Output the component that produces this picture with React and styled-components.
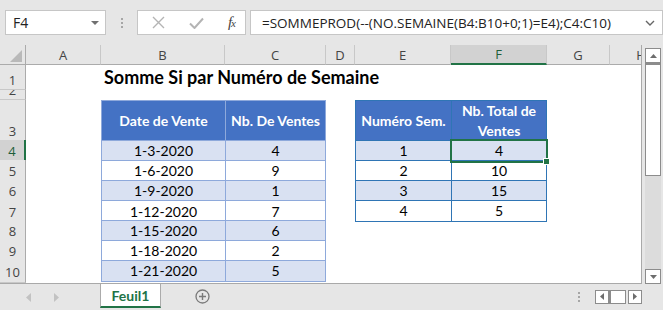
import React from 'react';
import styled, { createGlobalStyle, css } from 'styled-components';

const GlobalStyle = createGlobalStyle`
  html, body { margin: 0; padding: 0; background: #fff; }
  body { font-family: "Open Sans", "Noto Sans", sans-serif; }
`;

const UI_FONT = '"Open Sans", "Noto Sans", sans-serif';
const CELL_FONT = 'Lato, "Liberation Sans", sans-serif';
const GREEN = '#217346';

// column widths: row header, A, B, C, D, E, F, G, H (H runs under the scrollbar)
const LETTERS = ['A', 'B', 'C', 'D', 'E', 'F', 'G', 'H'];
const COLS = [26, 75, 124, 101, 29, 96, 96, 63, 63];
const TEMPLATE = COLS.map((c) => `${c}px`).join(' ');

const sales = [
  ['1-3-2020', 4],
  ['1-6-2020', 9],
  ['1-9-2020', 1],
  ['1-12-2020', 7],
  ['1-15-2020', 6],
  ['1-18-2020', 2],
  ['1-21-2020', 5],
];
const totals = [
  [1, 4],
  [2, 10],
  [3, 15],
  [4, 5],
];

const Window = styled.div`
  width: 663px;
  height: 310px;
  display: flex;
  flex-direction: column;
  background: #e6e6e6;
  overflow: hidden;
  font-family: ${UI_FONT};
`;

/* ---------- formula bar ---------- */

const Toolbar = styled.div`
  height: 45px;
  flex: none;
  display: flex;
  align-items: flex-start;
  padding: 10px 0 0 5px;
  box-sizing: border-box;
`;

const Box = styled.div`
  height: 25px;
  box-sizing: border-box;
  background: #fff;
  border: 1px solid #c6c6c6;
  display: flex;
  align-items: center;
`;

const NameBox = styled(Box)`
  width: 101px;
  padding: 0 6px 0 7px;
  justify-content: space-between;
  font-size: 14px;
  color: #222;
`;

const Grip = styled.div`
  width: 31px;
  height: 25px;
  display: flex;
  flex-direction: column;
  align-items: center;
  justify-content: center;
  gap: 2px;

  span {
    width: 2px;
    height: 2px;
    background: #a6a6a6;
  }
`;

const FxBox = styled(Box)`
  width: 109px;
  padding: 0 10px 0 14px;
  justify-content: space-between;
`;

const FxLabel = styled.span`
  font-family: "Liberation Serif", serif;
  font-style: italic;
  font-size: 15px;
  color: #444;
  letter-spacing: -1px;

  small {
    font-size: 11px;
  }
`;

const FormulaBox = styled(Box)`
  flex: 1;
  margin-left: 4px;
  padding: 0 7px 0 11px;
  justify-content: space-between;
  font-size: 13.5px;
  color: #222;
  white-space: nowrap;
`;

/* ---------- sheet ---------- */

const SheetArea = styled.div`
  height: 239px;
  flex: none;
  display: flex;
`;

const Grid = styled.div`
  width: 642px;
  display: flex;
  flex-direction: column;
  background: #fff;
  border-right: 1px solid #a9a9a9;
  border-bottom: 1px solid #a9a9a9;
  box-sizing: border-box;
  overflow: hidden;
`;

const Row = styled.div`
  display: grid;
  grid-template-columns: ${TEMPLATE};
  height: ${(p) => p.$h}px;
  flex: none;
`;

const Filler = styled.div`
  flex: 1;
  display: grid;
  grid-template-columns: ${TEMPLATE};
`;

const Corner = styled.div`
  background: #e6e6e6;
  border-right: 1px solid #ababab;
  border-bottom: 1px solid #ababab;
  display: flex;
  align-items: flex-end;
  justify-content: flex-end;
  padding: 0 3px 2px 0;
`;

const ColHead = styled.div`
  background: ${(p) => (p.$active ? '#d2d2d2' : '#e6e6e6')};
  border-right: 1px solid #c8c8c8;
  border-bottom: ${(p) => (p.$active ? `2px solid ${GREEN}` : '1px solid #ababab')};
  display: flex;
  align-items: center;
  justify-content: center;
  font-size: 13px;
  color: ${(p) => (p.$active ? '#1e5e3a' : '#444')};
  overflow: hidden;
  white-space: nowrap;
`;

const RowHead = styled.div`
  background: ${(p) => (p.$active ? '#d2d2d2' : '#e6e6e6')};
  border-right: ${(p) => (p.$active ? `2px solid ${GREEN}` : '1px solid #ababab')};
  border-bottom: 1px solid #c8c8c8;
  display: flex;
  align-items: flex-end;
  justify-content: center;
  font-size: 13px;
  line-height: 18px;
  color: ${(p) => (p.$active ? '#1e5e3a' : '#444')};
  overflow: hidden;
`;

const Blank = styled.div`
  background: #fff;
`;

const Title = styled.div`
  display: flex;
  align-items: flex-end;
  padding: 0 0 2px 3px;
  font-family: ${CELL_FONT};
  font-weight: 700;
  font-size: 18px;
  color: #000;
  white-space: nowrap;
  overflow: visible;
  position: relative;
  z-index: 1;
`;

const TCell = styled.div`
  position: relative;
  display: flex;
  align-items: center;
  justify-content: center;
  text-align: center;
  font-family: ${CELL_FONT};
  font-size: 14px;
  line-height: 20px;
  font-weight: ${(p) => (p.$head ? 700 : 400)};
  color: ${(p) => (p.$head ? '#fff' : '#000')};
  background: ${(p) => (p.$head ? '#4472c4' : p.$band ? '#d9e1f2' : '#fff')};
  border-top: 1px solid ${(p) => p.$line};
  border-left: 1px solid ${(p) => p.$line};
  ${(p) => p.$last && css`border-right: 1px solid ${p.$line};`}
  ${(p) => p.$bottom && css`border-bottom: 1px solid ${p.$line};`}
`;

const Selection = styled.div`
  position: absolute;
  top: -2px;
  left: -2px;
  right: -2px;
  bottom: -2px;
  border: 2px solid ${GREEN};
  z-index: 3;
  pointer-events: none;

  &::after {
    content: '';
    position: absolute;
    right: -4px;
    bottom: -4px;
    width: 5px;
    height: 5px;
    background: ${GREEN};
    border: 1px solid #fff;
  }
`;

/* ---------- vertical scrollbar ---------- */

const VScroll = styled.div`
  width: 21px;
  display: flex;
  flex-direction: column;
  padding: 3px 2px 0 3px;
  box-sizing: border-box;
`;

const ScrollBtn = styled.div`
  width: ${(p) => p.$w || 16}px;
  height: ${(p) => p.$h || 15}px;
  box-sizing: border-box;
  border: 1px solid #8c8c8c;
  background: #fff;
  display: flex;
  align-items: center;
  justify-content: center;
  flex: none;
`;

const VThumb = styled.div`
  height: 113px;
  flex: none;
  box-sizing: border-box;
  background: #fff;
  border: 1px solid #8c8c8c;
  border-top: 2px solid #8c8c8c;
`;

const VTrack = styled.div`
  flex: 1;
  background: #dcdcdc;
`;

/* ---------- sheet tabs ---------- */

const TabBar = styled.div`
  flex: 1;
  display: flex;
  align-items: stretch;
`;

const NavArrows = styled.div`
  width: 100px;
  display: flex;
  align-items: center;
  padding-left: 26px;
  gap: 23px;
  box-sizing: border-box;
`;

const SheetTab = styled.div`
  width: 61px;
  height: 24px;
  box-sizing: border-box;
  background: #fff;
  border-left: 1px solid #ababab;
  border-right: 1px solid #ababab;
  border-bottom: 2px solid ${GREEN};
  display: flex;
  align-items: center;
  justify-content: center;
  font-family: ${CELL_FONT};
  font-weight: 700;
  font-size: 14px;
  color: ${GREEN};
`;

const AddSheet = styled.div`
  margin-left: 34px;
  display: flex;
  align-items: center;
  padding-bottom: 1px;
`;

const HScroll = styled.div`
  margin-left: auto;
  margin-right: 21px;
  display: flex;
  align-items: center;
  padding-bottom: 1px;
`;

const HGrip = styled.div`
  display: flex;
  flex-direction: column;
  gap: 2px;
  margin-right: 15px;

  span {
    width: 2px;
    height: 2px;
    background: #a6a6a6;
  }
`;

const HThumb = styled.div`
  width: 17px;
  height: 14px;
  box-sizing: border-box;
  background: #fff;
  border: 1px solid #8c8c8c;
  border-left: 2px solid #8c8c8c;
  margin-right: 2px;
`;

const Tri = ({ dir, color = '#6d6d6d', w = 7, h = 4 }) => {
  const pts = {
    up: `0,${h} ${w / 2},0 ${w},${h}`,
    down: `0,0 ${w / 2},${h} ${w},0`,
    left: `${h},0 0,${w / 2} ${h},${w}`,
    right: `0,0 ${h},${w / 2} 0,${w}`,
  }[dir];
  const vertical = dir === 'up' || dir === 'down';
  return (
    <svg width={vertical ? w : h} height={vertical ? h : w}>
      <polygon points={pts} fill={color} />
    </svg>
  );
};

const GripDots = ({ as: As }) => (
  <As>
    <span />
    <span />
    <span />
  </As>
);

const rows = [
  { n: 1, h: 25 },
  { n: 2, h: 10 },
  { n: 3, h: 40 },
  ...sales.map((_, i) => ({ n: i + 4, h: 20 })),
];

const LEFT_LINE = '#8ea9db';
const RIGHT_LINE = '#2f75b5';

function renderCell(r, col) {
  const key = `${r}-${col}`;
  if (r === 1 && col === 'B') {
    return <Title key={key}>Somme Si par Numéro de Semaine</Title>;
  }
  if (r >= 3 && (col === 'B' || col === 'C')) {
    const head = r === 3;
    const k = r - 4;
    const text = head
      ? col === 'B' ? 'Date de Vente' : 'Nb. De Ventes'
      : sales[k][col === 'B' ? 0 : 1];
    return (
      <TCell
        key={key}
        $line={LEFT_LINE}
        $head={head}
        $band={!head && k % 2 === 0}
        $last={col === 'C'}
        $bottom={r === 10}
      >
        {text}
      </TCell>
    );
  }
  if (r >= 3 && r <= 7 && (col === 'E' || col === 'F')) {
    const head = r === 3;
    const k = r - 4;
    const text = head
      ? col === 'E' ? 'Numéro Sem.' : <>Nb. Total de<br />Ventes</>
      : totals[k][col === 'E' ? 0 : 1];
    return (
      <TCell
        key={key}
        $line={RIGHT_LINE}
        $head={head}
        $band={!head && k % 2 === 0}
        $last={col === 'F'}
        $bottom={r === 7}
      >
        {text}
        {r === 4 && col === 'F' && <Selection />}
      </TCell>
    );
  }
  return <Blank key={key} />;
}

export default function App() {
  return (
    <>
      <GlobalStyle />
      <Window>
        <Toolbar>
          <NameBox>
            F4
            <Tri dir="down" color="#707070" w={8} h={4} />
          </NameBox>
          <GripDots as={Grip} />
          <FxBox>
            <svg width="13" height="13" viewBox="0 0 13 13">
              <path d="M1 1 L12 12 M12 1 L1 12" stroke="#b4b4b4" strokeWidth="1.4" />
            </svg>
            <svg width="15" height="12" viewBox="0 0 15 12">
              <path d="M1 6.5 L5.5 11 L14 1.5" stroke="#b4b4b4" strokeWidth="2" fill="none" />
            </svg>
            <FxLabel>
              f<small>x</small>
            </FxLabel>
          </FxBox>
          <FormulaBox>
            <span>=SOMMEPROD(--(NO.SEMAINE(B4:B10+0;1)=E4);C4:C10)</span>
            <svg width="10" height="6" viewBox="0 0 10 6">
              <path d="M1 1 L5 5 L9 1" stroke="#666" strokeWidth="1.4" fill="none" />
            </svg>
          </FormulaBox>
        </Toolbar>

        <SheetArea>
          <Grid>
            <Row $h={20}>
              <Corner>
                <svg width="12" height="12">
                  <polygon points="12,0 12,12 0,12" fill="#b9b9b9" />
                </svg>
              </Corner>
              {LETTERS.map((l) => (
                <ColHead key={l} $active={l === 'F'}>
                  {l}
                </ColHead>
              ))}
            </Row>
            {rows.map((row) => (
              <Row key={row.n} $h={row.h}>
                <RowHead $active={row.n === 4}>{row.n}</RowHead>
                {LETTERS.map((l) => renderCell(row.n, l))}
              </Row>
            ))}
            <Filler>
              <RowHead />
            </Filler>
          </Grid>
          <VScroll>
            <ScrollBtn>
              <Tri dir="up" />
            </ScrollBtn>
            <VThumb />
            <VTrack />
            <ScrollBtn>
              <Tri dir="down" />
            </ScrollBtn>
          </VScroll>
        </SheetArea>

        <TabBar>
          <NavArrows>
            <Tri dir="left" color="#c2c2c2" w={9} h={5} />
            <Tri dir="right" color="#c2c2c2" w={9} h={5} />
          </NavArrows>
          <SheetTab>Feuil1</SheetTab>
          <AddSheet>
            <svg width="15" height="15" viewBox="0 0 15 15">
              <circle cx="7.5" cy="7.5" r="6.5" fill="none" stroke="#7a7a7a" strokeWidth="1.3" />
              <path d="M7.5 4 V11 M4 7.5 H11" stroke="#7a7a7a" strokeWidth="1.4" />
            </svg>
          </AddSheet>
          <HScroll>
            <GripDots as={HGrip} />
            <ScrollBtn $w={14} $h={14}>
              <Tri dir="left" w={7} h={4} />
            </ScrollBtn>
            <HThumb />
            <ScrollBtn $w={14} $h={14}>
              <Tri dir="right" w={7} h={4} />
            </ScrollBtn>
          </HScroll>
        </TabBar>
      </Window>
    </>
  );
}
